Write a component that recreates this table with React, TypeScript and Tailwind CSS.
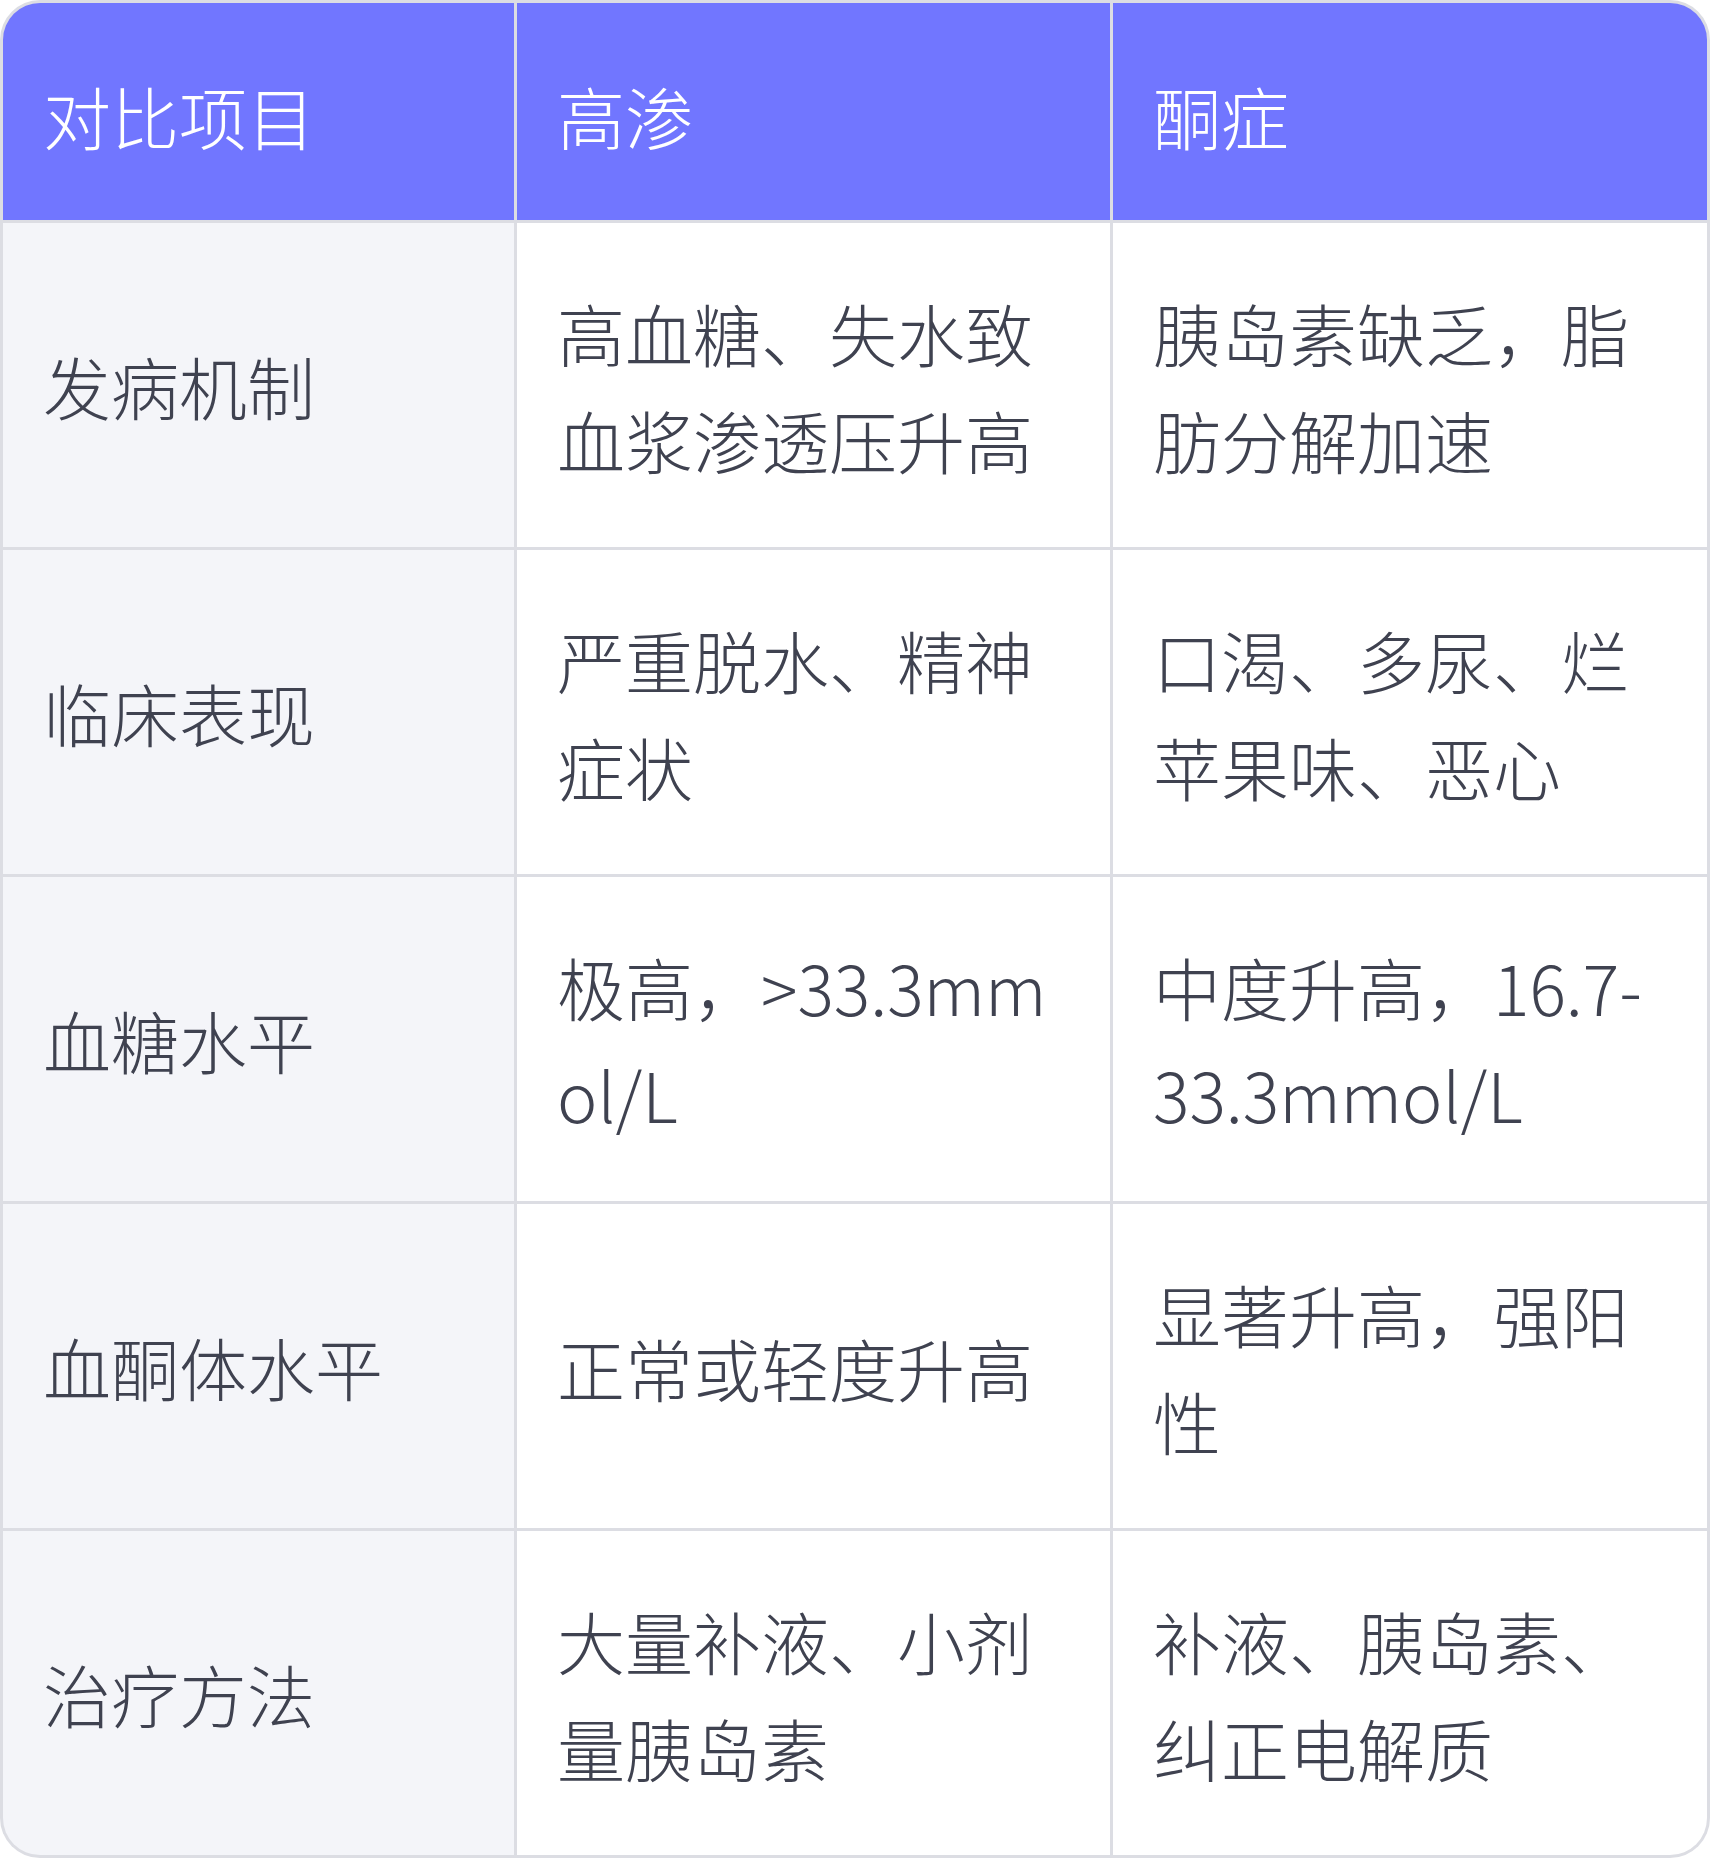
import React from "react";

const rows: [string, string, string][] = [
  ["发病机制", "高血糖、失水致血浆渗透压升高", "胰岛素缺乏，脂肪分解加速"],
  ["临床表现", "严重脱水、精神症状", "口渴、多尿、烂苹果味、恶心"],
  ["血糖水平", "极高，>33.3mmol/L", "中度升高，16.7-33.3mmol/L"],
  ["血酮体水平", "正常或轻度升高", "显著升高，强阳性"],
  ["治疗方法", "大量补液、小剂量胰岛素", "补液、胰岛素、纠正电解质"],
];

export default function App() {
  return (
    <div
      className="w-[1710px] h-[1858px] bg-white"
      style={{ fontFamily: '"Noto Sans CJK SC", "Noto Sans", sans-serif' }}
    >
      <div className="w-full h-full rounded-[40px] overflow-hidden bg-[#dcdde3] p-[3px]">
        <div className="grid grid-cols-[511px_593px_1fr] grid-rows-[217px_repeat(5,324px)] gap-[3px] h-full rounded-[37px] overflow-hidden">
          {["对比项目", "高渗", "酮症"].map((h) => (
            <div
              key={h}
              className="bg-[#7176ff] text-white text-[68px] leading-[107px] font-light px-10 flex items-center pt-[8px]"
            >
              {h}
            </div>
          ))}
          {rows.map((r) => (
            <React.Fragment key={r[0]}>
              <div className="bg-[#f4f5f9] text-[#3f4250] text-[68px] leading-[107px] font-light px-10 flex items-center">
                {r[0]}
              </div>
              <div className="bg-white text-[#3f4250] text-[68px] leading-[107px] font-light px-10 flex items-center break-all pt-[2px]">
                <span>{r[1]}</span>
              </div>
              <div className="bg-white text-[#3f4250] text-[68px] leading-[107px] font-light px-10 flex items-center break-all pt-[2px]">
                <span>{r[2]}</span>
              </div>
            </React.Fragment>
          ))}
        </div>
      </div>
    </div>
  );
}
